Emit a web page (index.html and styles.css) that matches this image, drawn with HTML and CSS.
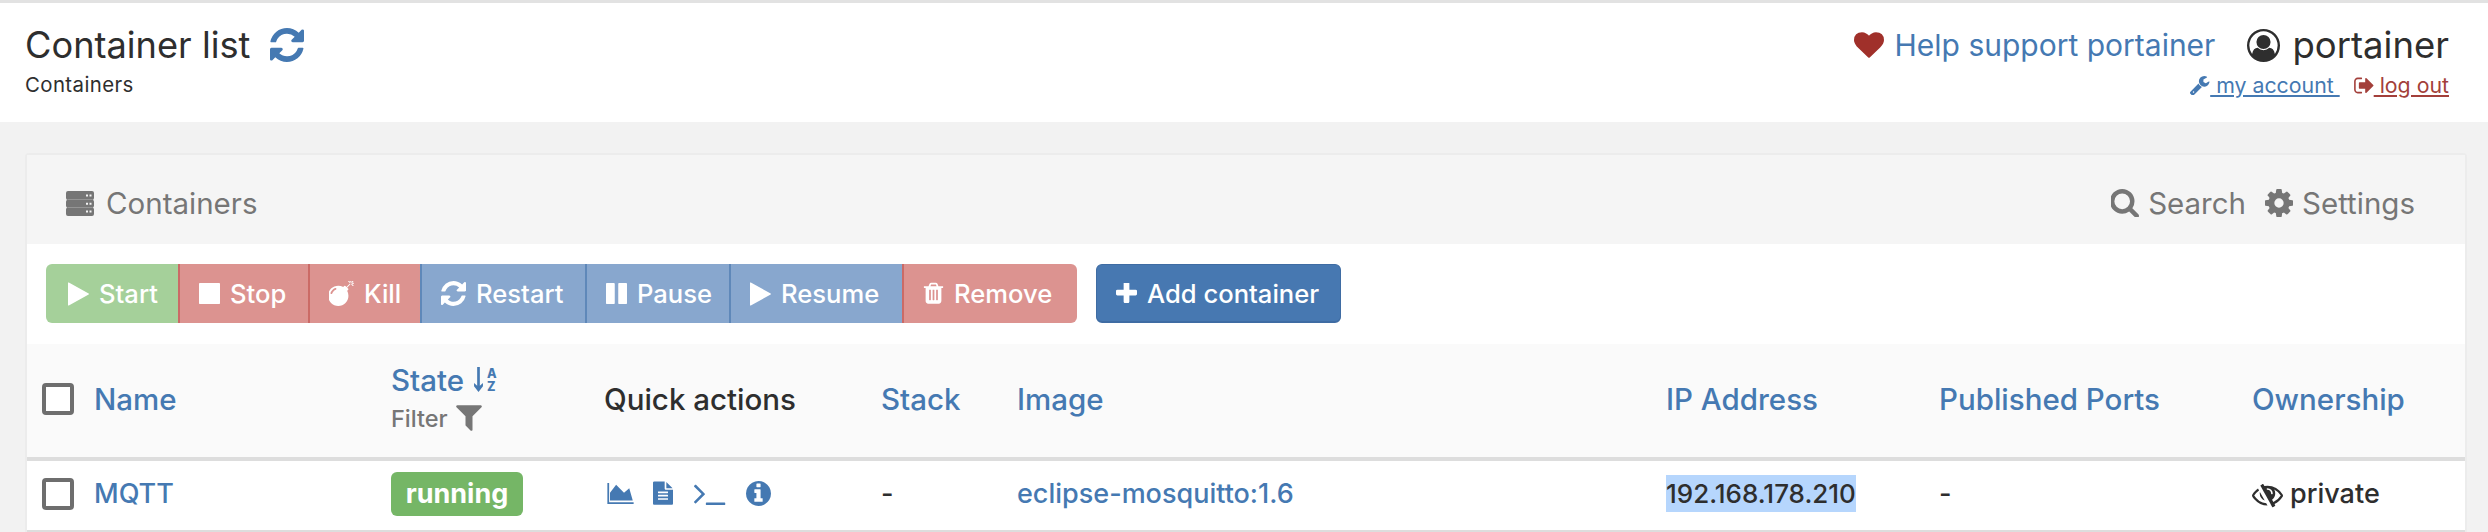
FILE: index.html
```html
<!doctype html>
<html>
  <head>
    <title>Container list</title>
    <meta charset="utf-8" />
    <link rel="stylesheet" href="styles.css">
  </head>
  <body>
    <svg class="sprite" xmlns="http://www.w3.org/2000/svg">
      <symbol id="i-refresh" viewBox="128 128 1536 1536"><path d="M1639 1056q0 5-1 7-64 268-268 434.5t-478 166.5q-146 0-282.5-55t-243.5-157l-129 129q-19 19-45 19t-45-19-19-45v-448q0-26 19-45t45-19h448q26 0 45 19t19 45-19 45l-137 137q71 66 161 102t187 36q134 0 250-65t186-179q11-17 53-117 8-23 30-23h192q13 0 22.5 9.5t9.5 22.5zm25-800v448q0 26-19 45t-45 19h-448q-26 0-45-19t-19-45 19-45l138-138q-148-137-349-137-134 0-250 65t-186 179q-11 17-53 117-8 23-30 23h-199q-13 0-22.5-9.5t-9.5-22.5v-7q65-268 270-434.5t480-166.5q146 0 284 55.5t245 156.5l130-129q19-19 45-19t45 19 19 45z"/></symbol>
      <symbol id="i-heart" viewBox="0 128 1792 1536"><path d="M896 1664q-26 0-44-18l-624-602q-10-8-27.5-26t-55.5-65.5-68-97.5-53.5-121-23.5-138q0-220 127-344t351-124q62 0 126.5 21.5t120 58 95.5 68.5 76 68q36-36 76-68t95.5-68.5 120-58 126.5-21.5q224 0 351 124t127 344q0 221-229 450l-623 600q-18 18-44 18z"/></symbol>
      <symbol id="i-user" viewBox="0 0 1792 1792"><path d="M896 0q182 0 348 71t286 191 191 286 71 348q0 181-70.5 347t-190.5 286-286 191.5-349 71.5-349-71-285.5-191.5-190.5-286-71-347.5 71-348 191-286 286-191 348-71zm619 1351q149-205 149-455 0-156-61-298t-164-245-245-164-298-61-298 61-245 164-164 245-61 298q0 250 149 455 66-327 306-327 131 128 313 128t313-128q240 0 306 327zm-235-647q0-159-112.5-271.5t-271.5-112.5-271.5 112.5-112.5 271.5 112.5 271.5 271.5 112.5 271.5-112.5 112.5-271.5z"/></symbol>
      <symbol id="i-wrench" viewBox="128 128 1600 1600"><path d="M448 1472q0-26-19-45t-45-19-45 19-19 45 19 45 45 19 45-19 19-45zm644-420l-682 682q-37 37-90 37-52 0-91-37l-106-108q-38-36-38-90 0-53 38-91l681-681q39 98 114.5 173.5t173.5 114.5zm634-435q0 39-23 106-47 134-164.5 217.5t-258.5 83.5q-185 0-316.5-131.5t-131.5-316.5 131.5-316.5 316.5-131.5q58 0 121.5 16.5t107.5 46.5q16 11 16 28t-16 28l-293 169v224l193 107q5-3 79-48.5t135.5-81 70.5-35.5q15 0 23.5 10t8.5 25z"/></symbol>
      <symbol id="i-signout" viewBox="64 128 1600 1536"><path d="M704 1440q0 4 1 20t.5 26.5-3 23.5-10 19.5-20.5 6.5h-320q-119 0-203.5-84.5t-84.5-203.5v-704q0-119 84.5-203.5t203.5-84.5h320q13 0 22.5 9.5t9.5 22.5q0 4 1 20t.5 26.5-3 23.5-10 19.5-20.5 6.5h-320q-66 0-113 47t-47 113v704q0 66 47 113t113 47h312l11.5 1 11.5 3 8 5.5 7 9 2 13.5zm928-544q0 26-19 45l-544 544q-19 19-45 19t-45-19-19-45v-288h-448q-26 0-45-19t-19-45v-384q0-26 19-45t45-19h448v-288q0-26 19-45t45-19 45 19l544 544q19 19 19 45z"/></symbol>
      <symbol id="i-server" viewBox="0 0 28 25"><path d="M2 0h24a2 2 0 0 1 2 2v5a2 2 0 0 1-2 2H2a2 2 0 0 1-2-2V2a2 2 0 0 1 2-2zm18 3.5v2h2v-2zm3.500 0v2h2v-2zM2 8.700h24a2 2 0 0 1 2 2v4a2 2 0 0 1-2 2H2a2 2 0 0 1-2-2v-4a2 2 0 0 1 2-2zm18 3v2h2v-2zm3.500 0v2h2v-2zM2 16.500h24a2 2 0 0 1 2 2V23a2 2 0 0 1-2 2H2a2 2 0 0 1-2-2v-4.500a2 2 0 0 1 2-2zm18 3v2h2v-2zm3.500 0v2h2v-2z" fill-rule="evenodd"/></symbol>
      <symbol id="i-search" viewBox="128 128 1600 1600"><path d="M1216 832q0-185-131.500-316.500t-316.500-131.500-316.500 131.500-131.500 316.500 131.500 316.500 316.500 131.500 316.500-131.500 131.500-316.500zm512 832q0 52-38 90t-90 38q-54 0-90-38l-343-342q-179 124-399 124-143 0-273.500-55.500t-225-150-150-225-55.500-273.500 55.500-273.500 150-225 225-150 273.500-55.500 273.500 55.500 225 150 150 225 55.500 273.500q0 220-124 399l343 343q37 37 37 90z"/></symbol>
      <symbol id="i-cog" viewBox="128 128 1536 1536"><path d="M1152 896q0-106-75-181t-181-75-181 75-75 181 75 181 181 75 181-75 75-181zm512-109v222q0 12-8 23t-20 13l-185 28q-19 54-39 91 35 50 107 138 10 12 10 25t-9 23q-27 37-99 108t-94 71q-12 0-26-9l-138-108q-44 23-91 38-16 136-29 186-7 28-36 28h-222q-14 0-24.500-8.500t-11.500-21.500l-28-184q-49-16-90-37l-141 107q-10 9-25 9-14 0-25-11-126-114-165-168-7-10-7-23 0-12 8-23 15-21 51-66.500t54-70.500q-27-50-41-99l-183-27q-13-2-21-12.500t-8-23.500v-222q0-12 8-23t19-13l186-28q14-46 39-92-40-57-107-138-10-12-10-24 0-10 9-23 26-36 98.500-107.500t94.500-71.500q13 0 26 10l138 107q44-23 91-38 16-136 29-186 7-28 36-28h222q14 0 24.500 8.500t11.500 21.500l28 184q49 16 90 37l142-107q9-9 24-9 13 0 25 10 129 119 165 170 7 8 7 22 0 12-8 23-15 21-51 66.500t-54 70.500q26 50 41 98l183 28q13 2 21 12.500t8 23.500z"/></symbol>
      <symbol id="i-play" viewBox="192 128 1408 1536"><path d="M1576 927l-1328 738q-23 13-39.500 3t-16.500-36v-1472q0-26 16.500-36t39.500 3l1328 738q23 13 23 31t-23 31z"/></symbol>
      <symbol id="i-stop" viewBox="128 128 1536 1536"><path d="M1664 192v1408q0 26-19 45t-45 19h-1408q-26 0-45-19t-19-45v-1408q0-26 19-45t45-19h1408q26 0 45 19t19 45z"/></symbol>
      <symbol id="i-pause" viewBox="128 128 1536 1536"><path d="M1664 192v1408q0 26-19 45t-45 19h-512q-26 0-45-19t-19-45v-1408q0-26 19-45t45-19h512q26 0 45 19t19 45zm-896 0v1408q0 26-19 45t-45 19h-512q-26 0-45-19t-19-45v-1408q0-26 19-45t45-19h512q26 0 45 19t19 45z"/></symbol>
      <symbol id="i-bomb" viewBox="64 64 1728 1728"><path d="M571 589q-10-25-34-35t-49 0q-108 44-191 127t-127 191q-10 25 0 49t35 34q13 5 24 5 42 0 60-40 34-84 98.500-148.500t148.500-98.500q25-11 35-35t0-49zm942-356l46 46-244 243 68 68q19 19 19 45.500t-19 45.500l-64 64q89 161 89 343 0 143-55.500 273.500t-150 225-225 150-273.500 55.500-273.500-55.500-225-150-150-225-55.500-273.500 55.500-273.500 150-225 225-150 273.500-55.500q182 0 343 89l64-64q19-19 45.500-19t45.500 19l68 68zm8-56q-10 10-22 10-13 0-23-10l-91-90q-9-10-9-23t9-23q10-9 23-9t23 9l90 91q10 9 10 22.500t-10 22.500zm230 230q-11 9-23 9t-23-9l-90-91q-10-9-10-22.500t10-22.500q9-10 22.500-10t22.500 10l91 90q9 10 9 23t-9 23zm41-183q0 14-9 23t-23 9h-96q-14 0-23-9t-9-23 9-23 23-9h96q14 0 23 9t9 23zm-192-192v96q0 14-9 23t-23 9-23-9-9-23v-96q0-14 9-23t23-9 23 9 9 23zm151 55l-91 90q-10 10-22 10-13 0-23-10-10-9-10-22.500t10-22.500l90-91q10-9 23-9t23 9q9 10 9 23t-9 23z"/></symbol>
      <symbol id="i-trash" viewBox="128 128 1536 1664"><path d="M704 1376v-704q0-14-9-23t-23-9h-64q-14 0-23 9t-9 23v704q0 14 9 23t23 9h64q14 0 23-9t9-23zm256 0v-704q0-14-9-23t-23-9h-64q-14 0-23 9t-9 23v704q0 14 9 23t23 9h64q14 0 23-9t9-23zm256 0v-704q0-14-9-23t-23-9h-64q-14 0-23 9t-9 23v704q0 14 9 23t23 9h64q14 0 23-9t9-23zm-544-992h448l-48-117q-7-9-17-11h-317q-10 2-17 11zm928 32v64q0 14-9 23t-23 9h-96v948q0 83-47 143.500t-113 60.500h-832q-66 0-113-58.500t-47-141.500v-952h-96q-14 0-23-9t-9-23v-64q0-14 9-23t23-9h309l70-167q15-37 54-63t79-26h320q40 0 79 26t54 63l70 167h309q14 0 23 9t9 23z"/></symbol>
      <symbol id="i-plus" viewBox="192 192 1408 1408"><path d="M1600 736v192q0 40-28 68t-68 28h-416v416q0 40-28 68t-68 28h-192q-40 0-68-28t-28-68v-416h-416q-40 0-68-28t-28-68v-192q0-40 28-68t68-28h416v-416q0-40 28-68t68-28h192q40 0 68 28t28 68v416h416q40 0 68 28t28 68z"/></symbol>
      <symbol id="i-filter" viewBox="128 256 1536 1408"><path d="M1595 295q17 41-14 70l-493 493v742q0 42-39 59-13 5-25 5-27 0-45-19l-256-256q-19-19-19-45v-486l-493-493q-31-29-14-70 17-39 59-39h1280q42 0 59 39z"/></symbol>
      <symbol id="i-area" viewBox="64 128 1920 1536"><path d="M1984 1536v128h-1920v-1536h128v1408h1792zm-320-1024l256 896h-1664v-576l448-576 576 576z"/></symbol>
      <symbol id="i-file" viewBox="128 128 1536 1664"><path d="M1596 476q14 14 28 36h-472v-472q22 14 36 28zm-476 164h544v1056q0 40-28 68t-68 28h-1344q-40 0-68-28t-28-68v-1600q0-40 28-68t68-28h800v544q0 40 28 68t68 28zm160 736v-64q0-14-9-23t-23-9h-704q-14 0-23 9t-9 23v64q0 14 9 23t23 9h704q14 0 23-9t9-23zm0-256v-64q0-14-9-23t-23-9h-704q-14 0-23 9t-9 23v64q0 14 9 23t23 9h704q14 0 23-9t9-23zm0-256v-64q0-14-9-23t-23-9h-704q-14 0-23 9t-9 23v64q0 14 9 23t23 9h704q14 0 23-9t9-23z"/></symbol>
      <symbol id="i-terminal" viewBox="64 320 1664 1216"><path d="M649 983l-466 466q-10 10-23 10t-23-10l-50-50q-10-10-10-23t10-23l393-393-393-393q-10-10-10-23t10-23l50-50q10-10 23-10t23 10l466 466q10 10 10 23t-10 23zm1079 457v64q0 14-9 23t-23 9h-960q-14 0-23-9t-9-23v-64q0-14 9-23t23-9h960q14 0 23 9t9 23z"/></symbol>
      <symbol id="i-info" viewBox="128 128 1536 1536"><path d="M1152 1376v-160q0-14-9-23t-23-9h-96v-512q0-14-9-23t-23-9h-320q-14 0-23 9t-9 23v160q0 14 9 23t23 9h96v320h-96q-14 0-23 9t-9 23v160q0 14 9 23t23 9h448q14 0 23-9t9-23zm-128-896v-160q0-14-9-23t-23-9h-192q-14 0-23 9t-9 23v160q0 14 9 23t23 9h192q14 0 23-9t9-23zm640 416q0 209-103 385.500t-279.500 279.500-385.500 103-385.500-103-279.500-279.500-103-385.500 103-385.500 279.500-279.500 385.500-103 385.500 103 279.500 279.500 103 385.500z"/></symbol>
      <symbol id="i-eyeslash" viewBox="0 128 1792 1536"><path transform="matrix(-1 0 0 1 1792 0)" d="M555 1335l78-141q-87-63-136-159t-49-203q0-121 61-225-229 117-381 353 167 258 427 375zm389-759q0-20-14-34t-34-14q-125 0-214.500 89.500t-89.500 214.500q0 20 14 34t34 14 34-14 14-34q0-86 61-147t147-61q20 0 34-14t14-34zm363-191q0 7-1 9-106 189-316 567t-315 566l-49 89q-10 16-28 16-12 0-134-70-16-10-16-28 0-12 44-87-143-65-263.500-173t-208.500-245q-20-31-20-69t20-69q153-235 380-371t496-136q89 0 180 17l54-97q10-16 28-16 5 0 18 6t31 15.500 33 18.500 31.500 18.500 19.500 11.500q16 10 16 27zm37 447q0 139-79 253.500t-209 164.500l280-502q8 45 8 84zm448 128q0 35-20 69-39 64-109 145-150 172-347.500 267t-419.500 95l74-132q212-18 392.500-137t301.500-307q-115-179-282-294l63-112q95 64 182.500 153t144.500 184q20 34 20 69z"/></symbol>
    </svg>

    <div class="page-header">
      <div class="header-left">
        <div class="page-title">Container list <svg class="icon refresh"><use href="#i-refresh"/></svg></div>
        <div class="page-sub">Containers</div>
      </div>
      <div class="header-right">
        <div class="user-line">
          <a class="help-link"><svg class="icon heart"><use href="#i-heart"/></svg>Help support portainer</a>
          <span class="user-name"><svg class="icon user"><use href="#i-user"/></svg>portainer</span>
        </div>
        <div class="account-line">
          <svg class="icon small-ico blue"><use href="#i-wrench"/></svg><a class="account-link">&nbsp;my account&nbsp;</a>
          <svg class="icon small-ico red"><use href="#i-signout"/></svg><a class="logout-link">&nbsp;log out</a>
        </div>
      </div>
    </div>

    <div class="content">
      <div class="widget">
        <div class="widget-header">
          <div class="widget-title"><svg class="icon server"><use href="#i-server"/></svg>Containers</div>
          <div class="widget-tools">
            <span class="tool"><svg class="icon tool-ico"><use href="#i-search"/></svg>Search</span>
            <span class="tool"><svg class="icon tool-ico"><use href="#i-cog"/></svg>Settings</span>
          </div>
        </div>

        <div class="actionbar">
          <div class="btn-group">
            <span class="btn success w-start"><svg class="icon btn-ico tall"><use href="#i-play"/></svg>Start</span>
            <span class="btn danger w-stop"><svg class="icon btn-ico"><use href="#i-stop"/></svg>Stop</span>
            <span class="btn danger w-kill"><svg class="icon btn-ico wide"><use href="#i-bomb"/></svg>Kill</span>
            <span class="btn primary w-restart"><svg class="icon btn-ico wide"><use href="#i-refresh"/></svg>Restart</span>
            <span class="btn primary w-pause"><svg class="icon btn-ico"><use href="#i-pause"/></svg>Pause</span>
            <span class="btn primary w-resume"><svg class="icon btn-ico tall"><use href="#i-play"/></svg>Resume</span>
            <span class="btn danger w-remove"><svg class="icon btn-ico tall"><use href="#i-trash"/></svg>Remove</span>
          </div>
          <span class="btn add"><svg class="icon btn-ico"><use href="#i-plus"/></svg>Add container</span>
        </div>

        <table class="table">
          <colgroup>
            <col class="c-name"><col class="c-state"><col class="c-quick"><col class="c-stack">
            <col class="c-image"><col class="c-ip"><col class="c-ports"><col class="c-owner">
          </colgroup>
          <thead>
            <tr>
              <th><div class="name-cell"><span class="check"></span><a>Name</a></div></th>
              <th>
                <div class="state-head"><a>State</a><span class="sort"><svg class="sort-arrow" viewBox="0 0 10 28"><path d="M3.500 0h3v21l3.500-3v3.500L5 28 0 21.500V18l3.500 3z"/></svg><span class="sort-az"><span>A</span><span>Z</span></span></span></div>
                <div class="filter">Filter<svg class="icon filter-ico"><use href="#i-filter"/></svg></div>
              </th>
              <th class="dark">Quick actions</th>
              <th><a>Stack</a></th>
              <th><a>Image</a></th>
              <th><a>IP Address</a></th>
              <th><a>Published Ports</a></th>
              <th><a>Ownership</a></th>
            </tr>
          </thead>
          <tbody>
            <tr>
              <td><div class="name-cell"><span class="check"></span><a>MQTT</a></div></td>
              <td><span class="label">running</span></td>
              <td>
                <div class="quick">
                  <svg class="icon q-area"><use href="#i-area"/></svg>
                  <svg class="icon q-file"><use href="#i-file"/></svg>
                  <svg class="icon q-term"><use href="#i-terminal"/></svg>
                  <svg class="icon q-info"><use href="#i-info"/></svg>
                </div>
              </td>
              <td>-</td>
              <td><a>eclipse-mosquitto:1.6</a></td>
              <td class="ip"><span class="selected">192.168.178.210</span></td>
              <td>-</td>
              <td><svg class="icon eye"><use href="#i-eyeslash"/></svg>private</td>
            </tr>
          </tbody>
        </table>
      </div>
    </div>
  </body>
</html>
```

FILE: styles.css
```css
* {
	padding:0;
	margin:0;
	box-sizing:border-box;
}

html, body {
	height:532px;
	overflow:hidden;
}

body {
	background-color:#f2f2f2;
	color:#2e2e2e;
	font-family:"Inter","Open Sans",sans-serif;
	font-size:27px;
}

a {
	color:#4579b2;
}

.sprite {
	display:none;
}

.icon {
	fill:currentColor;
	display:inline-block;
}

/* page header */
.page-header {
	height:122px;
	border-top:3px solid #e2e2e2;
	background-color:#fff;
	display:flex;
	justify-content:space-between;
	padding:22px 39px 0 25px;
}

.page-title {
	font-size:36.200px;
	line-height:40px;
	display:flex;
	align-items:center;
}

.refresh {
	width:34px;
	height:34px;
	margin-left:20px;
	color:#4579b2;
}

.page-sub {
	font-size:20.400px;
	line-height:24px;
	margin-top:8px;
	letter-spacing:0.4px;
}

.header-right {
	display:flex;
	flex-direction:column;
	align-items:flex-end;
}

.user-line {
	display:flex;
	align-items:center;
	height:40px;
}

.help-link {
	font-size:30px;
	display:flex;
	align-items:center;
}

.heart {
	width:30px;
	height:26px;
	margin-right:11px;
	color:#a0302a;
}

.user-name {
	font-size:36.500px;
	display:flex;
	align-items:center;
	margin-left:32px;
}

.user {
	width:33px;
	height:33px;
	margin-right:12px;
}

.account-line {
	font-size:21.300px;
	line-height:24px;
	margin-top:8px;
	display:flex;
	align-items:center;
}

.account-link {
	text-decoration:underline;
}

.logout-link {
	color:#a33f3a;
	text-decoration:underline;
}

.small-ico {
	width:20px;
	height:19px;
}

.blue {
	color:#4579b2;
}

.red {
	color:#a33f3a;
	margin-left:14px;
}

/* widget */
.content {
	padding:31px 21px 0 25px;
}

.widget {
	background-color:#fff;
	border:2px solid #ececec;
	border-bottom:none;
	border-radius:4px 4px 0 0;
}

.widget-header {
	height:89px;
	background-color:#f5f5f5;
	display:flex;
	align-items:center;
	justify-content:space-between;
	padding:7px 50px 0 39px;
	color:#767676;
	font-size:29.500px;
}

.widget-title,
.widget-tools,
.tool {
	display:flex;
	align-items:center;
}

.server {
	width:28px;
	height:25px;
	margin-right:12px;
}

.tool {
	margin-left:19px;
}

.tool-ico {
	width:28px;
	height:28px;
	margin-right:9px;
}

/* action buttons */
.actionbar {
	height:100px;
	padding:20px 0 0 19px;
	display:flex;
	gap:19px;
}

.btn-group {
	display:flex;
}

.btn {
	height:59px;
	display:flex;
	align-items:center;
	padding-left:19px;
	color:#fff;
	font-size:25.600px;
	font-weight:500;
	border-left:2px solid transparent;
}

.success {
	background-color:#a5d09a;
	border-radius:6px 0 0 6px;
	border-left:none;
	padding-left:22px;
}

.danger {
	background-color:#dc9390;
	border-left-color:#cb6a66;
}

.primary {
	background-color:#88a7ce;
	border-left-color:#5f88b9;
}

.w-start { width:132px; }
.w-stop { width:130px; }
.w-kill { width:112px; }
.w-restart { width:165px; }
.w-pause { width:144px; }
.w-resume { width:173px; }
.w-remove { width:175px; border-radius:0 6px 6px 0; }

.btn.add {
	width:245px;
	background-color:#4778b1;
	border:1px solid #3f6ca3;
	border-bottom-width:2px;
	border-radius:6px;
}

.btn-ico {
	width:21px;
	height:21px;
	margin-right:10px;
	flex-shrink:0;
}

.btn-ico.tall {
	height:24px;
}

.btn-ico.wide {
	width:25px;
	height:25px;
}

/* table */
.table {
	width:100%;
	table-layout:fixed;
	border-collapse:collapse;
}

.c-name { width:349px; }
.c-state { width:213px; }
.c-quick { width:277px; }
.c-stack { width:136px; }
.c-image { width:649px; }
.c-ip { width:273px; }
.c-ports { width:313px; }

.table th {
	height:115px;
	background-color:#fafafa;
	border-bottom:4px solid #ddd;
	font-size:29.500px;
	font-weight:500;
	text-align:left;
	padding:0 0 3px 15px;
	vertical-align:middle;
}

.table td {
	height:72px;
	border-bottom:2px solid #ddd;
	padding:0 0 4px 15px;
	font-weight:500;
}

.table td.ip {
	font-size:26px;
}

.table .dark {
	color:#2e2e2e;
}

.name-cell {
	display:flex;
	align-items:center;
	gap:20px;
}

.check {
	width:32px;
	height:32px;
	background-color:#fff;
	border:4px solid #6e6e6e;
	border-radius:4px;
}

.state-head {
	display:flex;
	align-items:center;
	height:34px;
}

.sort {
	display:flex;
	margin-left:10px;
	color:#4579b2;
}

.sort-arrow {
	width:9px;
	height:25px;
	fill:currentColor;
}

.sort-az {
	display:flex;
	flex-direction:column;
	margin-left:4px;
	font-size:12.500px;
	line-height:13px;
	font-weight:800;
}

.filter {
	display:flex;
	align-items:center;
	color:#767676;
	font-size:23.500px;
	height:34px;
	margin-top:4px;
}

.filter-ico {
	width:28px;
	height:28px;
	margin-left:7px;
}

.label {
	display:inline-block;
	width:132px;
	height:44px;
	line-height:44px;
	text-align:center;
	background-color:#75b666;
	color:#fff;
	font-weight:700;
	border-radius:6px;
}

.quick {
	display:flex;
	align-items:center;
	color:#4579b2;
}

.q-area { width:27px; height:21px; margin-left:3px; }
.q-file { width:20px; height:26px; margin-left:19px; }
.q-term { width:33px; height:23px; margin-left:20px; }
.q-info { width:25px; height:25px; margin-left:20px; }

.selected {
	display:inline-block;
	height:37px;
	line-height:37px;
	background-color:#b6d6fd;
}

.eye {
	width:31px;
	height:27px;
	margin-right:7px;
	vertical-align:-5px;
}
```
